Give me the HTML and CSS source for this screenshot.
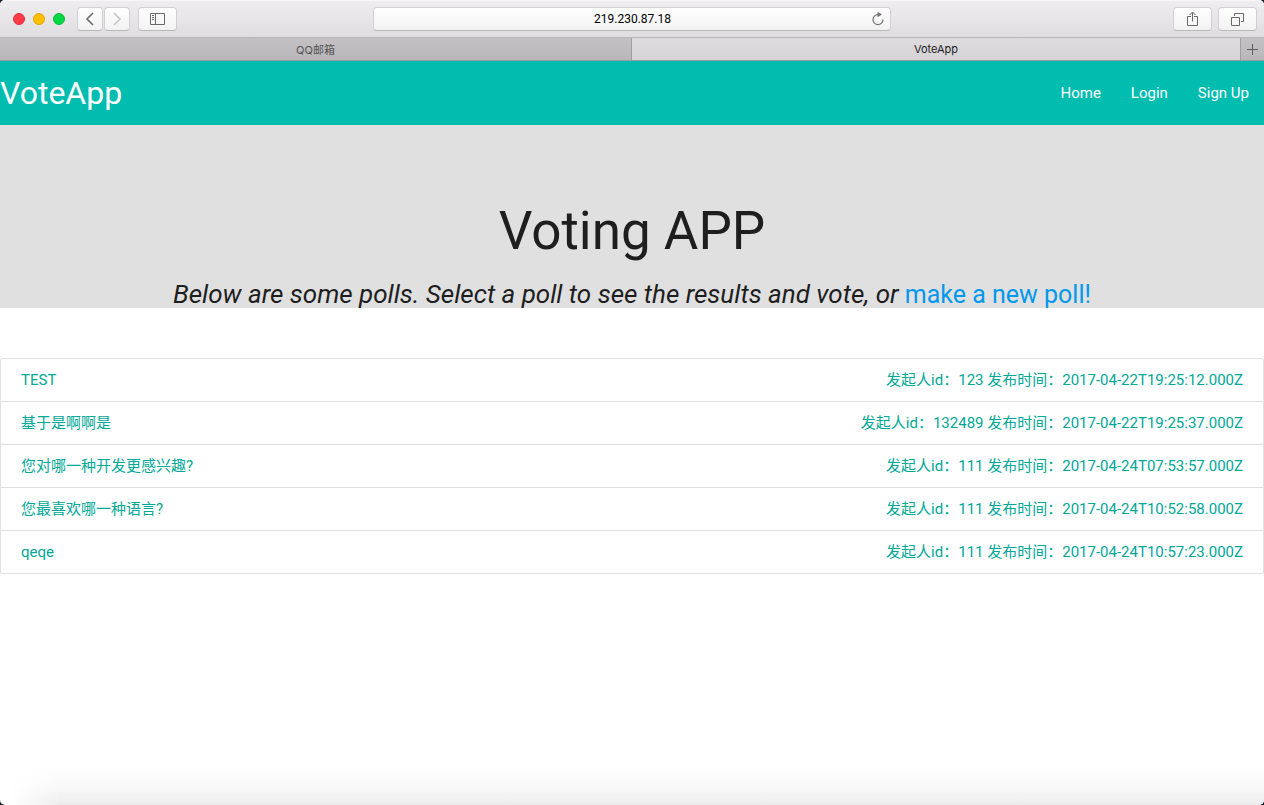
FILE: index.html
```html
<!DOCTYPE html>
<html lang="zh-CN">
<head>
<meta charset="utf-8">
<title>VoteApp</title>
<link rel="stylesheet" href="styles.css">
</head>
<body>
<div class="window">
  <div class="toolbar">
    <div class="tools">
      <div class="lights"><span class="light red"></span><span class="light yellow"></span><span class="light green"></span></div>
      <div class="history">
        <button class="tool arrow" type="button" aria-label="Back"><svg width="10" height="14" viewBox="0 0 10 14"><path d="M8 1 2 7l6 6" fill="none" stroke="#6b6b6b" stroke-width="1.6"/></svg></button>
        <button class="tool arrow" type="button" aria-label="Forward"><svg width="10" height="14" viewBox="0 0 10 14"><path d="m2 1 6 6-6 6" fill="none" stroke="#c4c4c4" stroke-width="1.6"/></svg></button>
      </div>
      <button class="tool wide" type="button" aria-label="Sidebar"><svg width="15" height="12" viewBox="0 0 15 12"><path d="M.5.5h14v11H.5zM5.500.5v11M2 2.500h2M2 4.500h2M2 6.500h2" fill="none" stroke="#686868"/></svg></button>
    </div>
    <div class="address">
      <input class="url" type="text" value="219.230.87.18" aria-label="Address">
      <button class="reload" type="button" aria-label="Reload"><svg width="14" height="16" viewBox="0 0 14 16"><path d="M7 3.600A5 5 0 1 0 12 8.600" fill="none" stroke="#747474" stroke-width="1.200"/><path d="M6.500.8 11 3.600 6.500 6.300z" fill="#747474"/></svg></button>
    </div>
    <div class="tools end">
      <button class="tool wide" type="button" aria-label="Share"><svg width="11" height="16" viewBox="0 0 11 16"><path d="M4 5.500H.5v9h10v-9H7M5.500 10.500V1.500M2.500 4l3-3 3 3" fill="none" stroke="#686868"/></svg></button>
      <button class="tool wide" type="button" aria-label="Tabs"><svg width="13" height="13" viewBox="0 0 13 13"><path d="M.5 4.500h8v8h-8zM3.500 3V.5h9v8H10" fill="none" stroke="#686868"/></svg></button>
    </div>
  </div>
  <div class="tabs">
    <button class="tab first" type="button">QQ邮箱</button>
    <button class="tab active" type="button">VoteApp</button>
    <button class="add" type="button" aria-label="New tab"><svg width="11" height="11" viewBox="0 0 11 11"><path d="M5.500 0v11M0 5.500h11" stroke="#5c5c5c"/></svg></button>
  </div>
  <nav class="nav">
    <a class="brand" href="#">VoteApp</a>
    <div class="links"><a href="#">Home</a><a href="#">Login</a><a href="#">Sign Up</a></div>
  </nav>
  <header class="hero">
    <h1 class="title">Voting APP</h1>
    <p class="lead"><em>Below are some polls. Select a poll to see the results and vote, or</em> <a href="#">make a new poll!</a></p>
  </header>
  <main class="main">
    <div class="polls">
      <a class="poll" href="#"><span>TEST</span><span>发起人id：123 发布时间：2017-04-22T19:25:12.000Z</span></a>
      <a class="poll" href="#"><span>基于是啊啊是</span><span>发起人id：132489 发布时间：2017-04-22T19:25:37.000Z</span></a>
      <a class="poll" href="#"><span>您对哪一种开发更感兴趣?</span><span>发起人id：111 发布时间：2017-04-24T07:53:57.000Z</span></a>
      <a class="poll" href="#"><span>您最喜欢哪一种语言?</span><span>发起人id：111 发布时间：2017-04-24T10:52:58.000Z</span></a>
      <a class="poll" href="#"><span>qeqe</span><span>发起人id：111 发布时间：2017-04-24T10:57:23.000Z</span></a>
    </div>
  </main>
  <div class="shade"></div>
</div>
</body>
</html>
```
FILE: styles.css
```css
* { box-sizing: border-box; }
body {
  margin: 0;
  background: #10222a;
  color: #1e1e1e;
  font-family: Roboto, "Noto Sans CJK SC", sans-serif;
  font-size: 15px;
}
a { color: inherit; text-decoration: none; }
button { border: 0; padding: 0; background: none; font: inherit; color: inherit; }
svg { display: block; }

.window {
  display: flex;
  flex-direction: column;
  min-height: 100vh;
  overflow: hidden;
  background: #fff;
  border-radius: 5px;
}

.toolbar {
  display: grid;
  grid-template-columns: 1fr 41% 1fr;
  align-items: center;
  height: 38px;
  background: linear-gradient(#efedef, #dfdde0);
  border-top: 1px solid #f7f6f7;
  border-bottom: 1px solid #b8b6b9;
}
.tools { display: flex; align-items: center; gap: 8px; padding-left: 13px; }
.end { justify-content: flex-end; gap: 6px; padding: 0 7px 0 0; }
.lights { display: flex; gap: 8px; margin-right: 4px; }
.light { width: 12px; height: 12px; border-radius: 50%; border: 1px solid; }
.red { background: #ff3b47; border-color: #e5303b; }
.yellow { background: #ffbe00; border-color: #e3a405; }
.green { background: #00d742; border-color: #0fb83a; }
.history { display: flex; gap: 1px; }
.tool {
  display: grid;
  place-items: center;
  height: 24px;
  background: linear-gradient(#fff, #f3f2f3);
  border: 1px solid #d2d0d3;
  border-bottom-color: #b9b7ba;
  border-radius: 4px;
}
.arrow { width: 26px; }
.wide { width: 39px; }
.address {
  display: flex;
  align-items: center;
  height: 24px;
  padding: 0 5px 0 20px;
  background: linear-gradient(#fff, #f3f2f3);
  border: 1px solid #d2d0d3;
  border-bottom-color: #b9b7ba;
  border-radius: 4px;
}
.url {
  flex: 1;
  min-width: 0;
  border: 0;
  padding: 0;
  background: none;
  outline: 0;
  text-align: center;
  color: #000;
  font: 12px Roboto, sans-serif;
}

.tabs {
  display: flex;
  height: 23px;
  border-bottom: 1px solid #9b999c;
  font: 11px Inter, "Noto Sans CJK SC", sans-serif;
}
.tab { flex: 1 1 0; background: linear-gradient(#dedcdf, #d5d3d6); color: #222; }
.first { flex: 0 0 50%; background: linear-gradient(#c3c1c4, #b9b7ba); border-right: 1px solid #a09ea1; color: #555; }
.add {
  display: grid;
  place-items: center;
  width: 24px;
  background: linear-gradient(#c3c1c4, #b9b7ba);
  border-left: 1px solid #a09ea1;
}

.nav {
  display: flex;
  align-items: center;
  justify-content: space-between;
  height: 64px;
  background: #00bdb0;
  color: #fff;
}
.brand { font-size: 32px; }
.links { display: flex; gap: 30px; padding-right: 15px; }

.hero {
  padding-top: 73px;
  background: #e0e0e0;
  text-align: center;
}
.title { margin: 0 0 18px; font-size: 53px; font-weight: 400; line-height: 66px; }
.lead { margin: 0; font-size: 25px; line-height: 26px; }
.lead em { font-size: 26px; line-height: 24px; }
.lead a { color: #0098ee; }

.main { flex: 1; padding-top: 50px; }
.polls { border: 1px solid #e0e0e0; border-radius: 2px; }
.poll {
  display: flex;
  justify-content: space-between;
  padding: 10px 20px;
  line-height: 22px;
  color: #00a897;
}
.poll + .poll { border-top: 1px solid #e0e0e0; }

.shade {
  height: 40px;
  background: linear-gradient(#fff, #fafafa 50%, #ececec);
  -webkit-mask-image: linear-gradient(90deg, transparent 10px, #000 60px);
  mask-image: linear-gradient(90deg, transparent 10px, #000 60px);
}
```
